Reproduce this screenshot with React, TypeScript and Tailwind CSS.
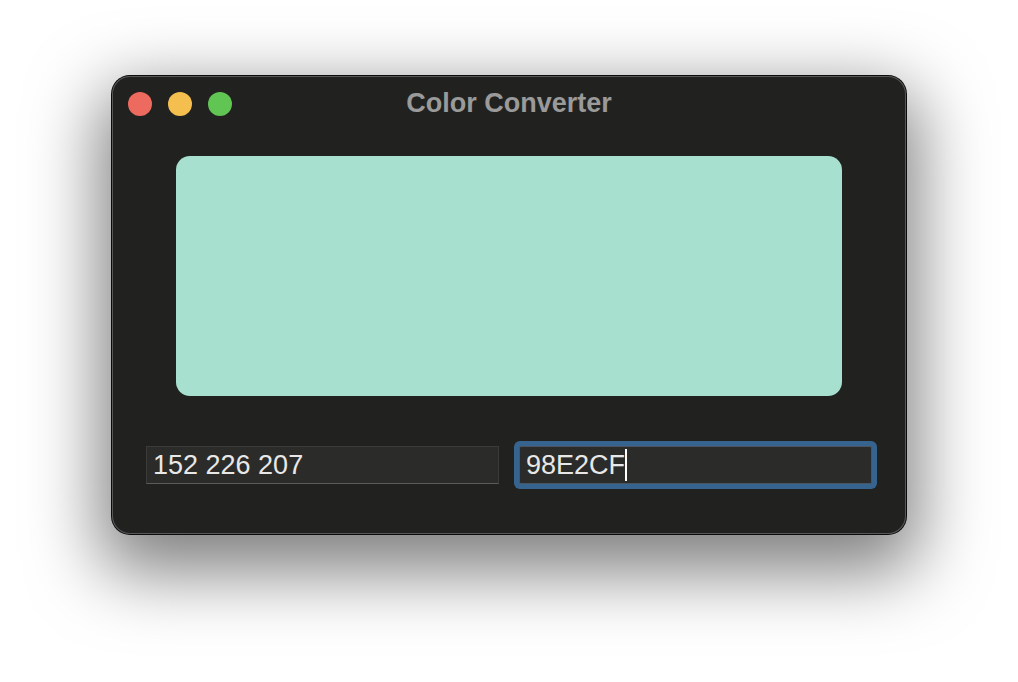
import React from "react";

export default function App() {
  return (
    <div
      className="w-[1018px] h-[682px] bg-white flex justify-center pt-[76px] overflow-hidden"
      style={{ fontFamily: '"Liberation Sans", Arial, sans-serif' }}
    >
      <div className="w-[794px] h-[458px] rounded-[18px] bg-[#212220] flex flex-col shadow-[inset_0_0_0_1px_#585858,0_0_0_1px_#0b0b0b,0_26px_70px_12px_rgba(0,0,0,0.5)]">
        <div className="h-[56px] grid grid-cols-[1fr_auto_1fr] items-end">
          <div className="flex gap-[16px] pl-[16px] pb-[16px]">
            <span className="w-[24px] h-[24px] rounded-full bg-[#ec6a5e]" />
            <span className="w-[24px] h-[24px] rounded-full bg-[#f4bf4f]" />
            <span className="w-[24px] h-[24px] rounded-full bg-[#61c554]" />
          </div>
          <div className="text-[27px] leading-none font-bold text-[#9a9a9a] pb-[15px]">
            Color Converter
          </div>
          <div />
        </div>
        <div className="mt-[24px] mx-[64px] h-[240px] rounded-[14px] bg-[#a7e0cf]" />
        <div className="mt-[50px] px-[34px] grid grid-cols-2 gap-[20px]">
          <div className="h-[38px] bg-[#2b2c2a] border border-[#3b3c3a] border-b-[#5c5d5b] flex items-center pl-[6px] text-[27px] text-[#e8e8e8]">
            152 226 207
          </div>
          <div className="h-[38px] bg-[#2b2c2a] border border-[#4a5560] flex items-center pl-[6px] text-[27px] text-[#e8e8e8] rounded-[2px] shadow-[0_0_0_5px_#37648f]">
            98E2CF
            <span className="w-[2px] h-[32px] bg-white" />
          </div>
        </div>
      </div>
    </div>
  );
}
